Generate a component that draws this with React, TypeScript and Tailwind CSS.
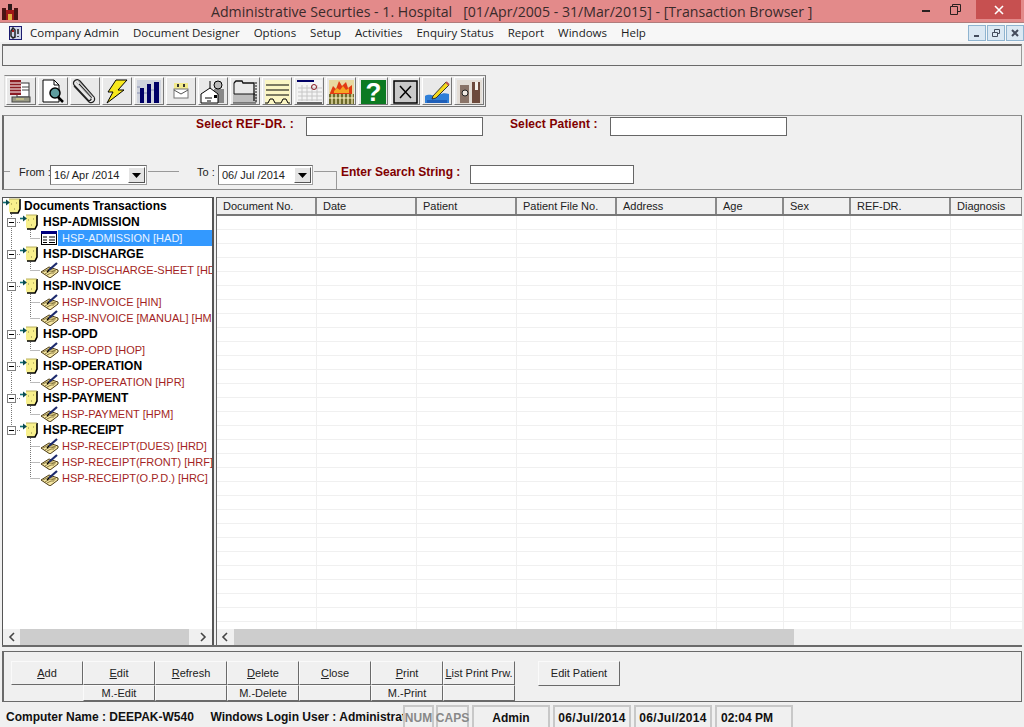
import React from 'react';

const menus = ['Company Admin', 'Document Designer', 'Options', 'Setup', 'Activities', 'Enquiry Status', 'Report', 'Windows', 'Help'];

const columns = [
  { label: 'Document No.', width: 'w-[100px]' },
  { label: 'Date', width: 'w-[100px]' },
  { label: 'Patient', width: 'w-[100px]' },
  { label: 'Patient File No.', width: 'w-[100px]' },
  { label: 'Address', width: 'w-[100px]' },
  { label: 'Age', width: 'w-[67px]' },
  { label: 'Sex', width: 'w-[67px]' },
  { label: 'REF-DR.', width: 'w-[100px]' },
  { label: 'Diagnosis', width: 'w-[72px]' },
];

const tree = [
  { name: 'HSP-ADMISSION', items: ['HSP-ADMISSION [HAD]'] },
  { name: 'HSP-DISCHARGE', items: ['HSP-DISCHARGE-SHEET [HDS]'] },
  { name: 'HSP-INVOICE', items: ['HSP-INVOICE [HIN]', 'HSP-INVOICE [MANUAL] [HMN]'] },
  { name: 'HSP-OPD', items: ['HSP-OPD [HOP]'] },
  { name: 'HSP-OPERATION', items: ['HSP-OPERATION [HPR]'] },
  { name: 'HSP-PAYMENT', items: ['HSP-PAYMENT [HPM]'] },
  { name: 'HSP-RECEIPT', items: ['HSP-RECEIPT(DUES) [HRD]', 'HSP-RECEIPT(FRONT) [HRF]', 'HSP-RECEIPT(O.P.D.) [HRC]'] },
];

const BookIcon = () => (
  <svg width="20" height="16" viewBox="0 0 20 16" className="shrink-0">
    <path d="M6 1h11v10l-2 4H7l-1-2z" fill="#f8f08c" />
    <path d="M17 1v10l-2 4H7" fill="none" stroke="#000" strokeWidth="1.6" />
    <path d="M6 1h11" stroke="#b8b060" />
    <path d="M11 11h1M8 6h1M13 5h1" stroke="#8a8440" />
    <path d="M0 4.5h5" stroke="#0f6f74" strokeWidth="1.6" />
    <path d="M3 1.5l4 3-4 3z" fill="#0b4a50" />
  </svg>
);

const PenBookIcon = () => (
  <svg width="18" height="16" viewBox="0 0 18 16" className="shrink-0">
    <path d="M0 10l8-5 9 3v2l-8 6z" fill="#f6e7a4" stroke="#4a3a14" />
    <path d="M2 10l6-3 7 2M4 12l5-3 5 1M6 13l4-2 3 0" fill="none" stroke="#8a7a40" />
    <path d="M8 8l8-7" stroke="#1c2a6e" strokeWidth="2.2" />
    <path d="M6 10l2-2" stroke="#000" strokeWidth="1.4" />
  </svg>
);

const FormIcon = () => (
  <svg width="16" height="14" viewBox="0 0 16 14" className="shrink-0">
    <rect x="0.5" y="0.5" width="15" height="13" fill="#fff" stroke="#000" />
    <rect x="0" y="0" width="16" height="3" fill="#000080" />
    <path d="M2 6h4M2 9h4M2 11.5h4M8 6h6M8 9h6M8 11.5h6" stroke="#000" />
  </svg>
);

const Gutter = ({ width, children }: { width: number; children: React.ReactNode }) => (
  <svg width={width} height="16" viewBox={`0 0 ${width} 16`} className="shrink-0">
    {children}
  </svg>
);

const dots = { stroke: '#777', strokeDasharray: '1 1', fill: 'none' };

const GroupRow = ({ name, last }: { name: string; last: boolean }) => (
  <div className="flex h-4 items-center">
    <Gutter width={17}>
      <path d={last ? 'M8.5 0v4' : 'M8.5 0v16'} {...dots} />
      <path d="M12 8.5h5" {...dots} />
      <rect x="4.5" y="4.5" width="8" height="8" fill="#fff" stroke="#808080" />
      <path d="M6 8.5h5" stroke="#000" />
    </Gutter>
    <BookIcon />
    <span className="ml-[3px] whitespace-nowrap text-[12px] font-bold text-black">{name}</span>
  </div>
);

const ChildRow = ({ label, lastGroup, lastItem, selected }: { label: string; lastGroup: boolean; lastItem: boolean; selected: boolean }) => (
  <div className="flex h-4 items-center">
    <Gutter width={38}>
      {!lastGroup && <path d="M8.5 0v16" {...dots} />}
      <path d={lastItem ? 'M27.5 0v8' : 'M27.5 0v16'} {...dots} />
      <path d="M27.5 8.5h10" {...dots} />
    </Gutter>
    {selected ? <FormIcon /> : <PenBookIcon />}
    {selected ? (
      <span className="ml-px flex h-4 flex-1 items-center whitespace-nowrap bg-[#3399ff] pl-[4px] text-[11px] text-[#e8f2ff]">{label}</span>
    ) : (
      <span className="ml-[3px] whitespace-nowrap text-[11px] text-[#a31f24]">{label}</span>
    )}
  </div>
);

const Arrow = ({ dir }: { dir: 'left' | 'right' }) => (
  <svg width="8" height="10" viewBox="0 0 8 10" className="shrink-0">
    <path d={dir === 'left' ? 'M6 1L2 5l4 4' : 'M2 1l4 4-4 4'} fill="none" stroke="#444" strokeWidth="1.6" />
  </svg>
);

const DateCombo = ({ value, width }: { value: string; width: string }) => (
  <div className={`flex h-[20px] ${width} shrink-0 items-center border border-t-[#6d6d6d] border-l-[#6d6d6d] border-r-[#a0a0a0] border-b-[#a0a0a0] bg-white pl-[3px] pr-px`}>
    <span className="flex-1 whitespace-nowrap text-[11px] text-[#222]">{value}</span>
    <div className="flex h-[16px] w-[17px] items-center justify-center border border-t-white border-l-white border-r-[#555] border-b-[#555] bg-[#e4e4e4]">
      <svg width="9" height="5" viewBox="0 0 9 5"><path d="M0 0h9L4.5 5z" fill="#000" /></svg>
    </div>
  </div>
);

const Bevel = ({ className, children }: { className: string; children?: React.ReactNode }) => (
  <div className={`flex shrink-0 items-center justify-center whitespace-nowrap border border-t-[#fafafa] border-l-[#fafafa] border-r-[#6a6a6a] border-b-[#6a6a6a] bg-[#f0f0f0] text-[11px] text-[#222] ${className}`}>
    {children}
  </div>
);

const StatusCell = ({ className, children }: { className: string; children: React.ReactNode }) => (
  <div className={`flex h-[23px] shrink-0 items-center whitespace-nowrap border-2 border-b-0 border-[#c8c8c8] text-[12px] font-bold text-[#111] ${className}`}>
    {children}
  </div>
);

const toolIcons: React.ReactNode[] = [
  <>
    <rect x="9" y="4" width="12" height="14" fill="#fff" stroke="#333" />
    <rect x="2" y="1" width="11" height="15" fill="#8c1c24" />
    <path d="M2 4h11M2 7h11M2 10h11M2 13h11" stroke="#fff" />
    <path d="M14 8h7M14 11h7" stroke="#444" />
    <rect x="4" y="18" width="18" height="5" fill="#9b9b86" stroke="#444" />
    <path d="M8 20h8" stroke="#e8e08a" />
  </>,
  <>
    <path d="M3 1h11l5 5v17H3z" fill="#fff" stroke="#000" />
    <path d="M14 1v5h5" fill="none" stroke="#000" />
    <circle cx="15" cy="14" r="5" fill="#5f9ea0" stroke="#000" strokeWidth="1.5" />
    <path d="M18 18l5 5" stroke="#000" strokeWidth="2.5" />
  </>,
  <>
    <path d="M2 7l15 16c3 2 7-1 5-5L8 2C5-1 0 2 2 6l14 15c2 2 4-1 3-3L7 5" fill="none" stroke="#222" strokeWidth="1.2" />
    <path d="M4 3l16 17M6 2l16 17" stroke="#bbb" />
  </>,
  <>
    <path d="M12 1h11L14 11h6L3 24l6-11H4z" fill="#f8e81c" stroke="#000" />
  </>,
  <>
    <rect x="1" y="1" width="24" height="23" fill="#cfd3dd" />
    <path d="M4 9h4v15H4zM11 5h4v19h-4zM18 3h5v21h-5z" fill="#000066" />
    <path d="M1 8h3M1 14h3M8 14h3M15 11h3" stroke="#8890b0" />
  </>,
  <>
    <rect x="6" y="4" width="14" height="6" fill="#f2ea8c" />
    <rect x="6" y="10" width="14" height="9" fill="#fff" stroke="#777" />
    <path d="M6 11l7 4 7-4" fill="none" stroke="#555" />
    <path d="M10 5v3M16 5v3" stroke="#333" strokeWidth="2" />
  </>,
  <>
    <rect x="14" y="10" width="10" height="14" fill="#888" />
    <circle cx="18" cy="6" r="4" fill="#bbb" stroke="#000" />
    <path d="M10 2v8" stroke="#000" />
    <path d="M1 15l9-6 8 6v9H1z" fill="#fff" stroke="#000" />
    <path d="M5 19h7M7 22h4" stroke="#000" />
    <rect x="14" y="16" width="3" height="3" fill="#000" />
  </>,
  <>
    <rect x="1" y="15" width="24" height="9" fill="#bdbdbd" />
    <path d="M2 4l2-2h6l1 2h11v18" fill="none" stroke="#111" strokeWidth="1.3" />
    <path d="M24 3v20" stroke="#111" strokeDasharray="2 1" />
    <path d="M2 4v11h21" fill="none" stroke="#111" />
    <path d="M1 24h23" stroke="#333" />
  </>,
  <>
    <rect x="1" y="1" width="25" height="24" fill="#fbf6c4" />
    <path d="M2 6h23M2 11h23M2 16h23" stroke="#000" strokeWidth="1.2" />
    <path d="M1 24h3l2-4h3l2 4h6l2-4h3l2 4h2" fill="none" stroke="#000" />
  </>,
  <>
    <rect x="1" y="1" width="25" height="24" fill="#f4f4f4" />
    <rect x="1" y="1" width="17" height="2" fill="#000066" />
    <path d="M6 6v16M11 6v16M16 6v16M21 6v16M2 9h24M2 13h24M2 17h24M2 21h24" stroke="#c6c6c6" />
    <circle cx="18" cy="8" r="2.5" fill="none" stroke="#8c1c24" />
    <path d="M1 24h25" stroke="#333" strokeWidth="1.5" />
  </>,
  <>
    <rect x="1" y="1" width="25" height="24" fill="#e8d9a0" />
    <path d="M2 14l3-7 3 3 3-8 3 5 4-4 2 6 4-3v10H2z" fill="#e23a12" />
    <path d="M6 12l3-3 3 2 3-4 3 4 3-2v5H6z" fill="#f5a623" />
    <rect x="1" y="15" width="25" height="10" fill="#6d6a2a" />
    <path d="M4 15v10M8 15v10M12 15v10M16 15v10M20 15v10M24 15v10M1 19h25" stroke="#fff6c4" strokeWidth="1.2" />
  </>,
  <>
    <rect x="1" y="1" width="25" height="24" fill="#0c7a22" />
    <text x="13.5" y="22" textAnchor="middle" fontSize="26" fontWeight="700" fontFamily="'Liberation Sans', sans-serif" fill="#fff">?</text>
  </>,
  <>
    <rect x="2" y="2" width="23" height="22" fill="#c9c9c9" stroke="#000" strokeWidth="1.5" />
    <path d="M8 7l11 12M19 7L8 19" stroke="#000" strokeWidth="1.5" />
  </>,
  <>
    <path d="M1 24v-7c5-3 8 1 13-1s7-2 11-1v9z" fill="#2f7fd8" />
    <path d="M3 24v-3h20v3z" fill="#1f5fb8" />
    <path d="M9 17L22 3l3 3-13 13-4 1z" fill="#f5d91c" stroke="#333" />
    <path d="M22 3l3 3" stroke="#b55" strokeWidth="2" />
  </>,
  <>
    <rect x="1" y="1" width="25" height="24" fill="#e3ddd6" />
    <rect x="4" y="6" width="9" height="18" fill="#8a7468" />
    <circle cx="9" cy="14" r="3" fill="#efe9e2" stroke="#222" />
    <rect x="16" y="3" width="8" height="21" fill="#6d4a3c" />
    <path d="M19 3h3v8h-3z" fill="#f4f0ea" />
  </>,
];

export default function App() {
  return (
    <div className="flex h-[727px] w-[1024px] flex-col overflow-hidden bg-[#f0f0f0] font-['Liberation_Sans',Arial,sans-serif]">
      {/* title bar */}
      <div className="flex h-[23px] shrink-0 items-start border-b border-[#b07c7c] bg-[#e38a8a]">
        <svg width="18" height="18" viewBox="0 0 18 18" className="ml-[1px] mt-[3px] shrink-0">
          <path d="M2 7h14v10H2z" fill="#a01818" />
          <rect x="7" y="1" width="4" height="6" fill="#2a1a1a" />
          <rect x="1" y="5" width="4" height="12" fill="#4a1414" />
          <rect x="13" y="5" width="4" height="12" fill="#4a1414" />
          <rect x="7" y="11" width="4" height="6" fill="#e2b040" />
        </svg>
        <div className="ml-[192px] flex-1 whitespace-pre pt-[1px] font-['Open_Sans',sans-serif] text-[14.15px] leading-[21px] text-[#3a2a2a]">
          Administrative Securties - 1. Hospital   [01/Apr/2005 - 31/Mar/2015] - [Transaction Browser ]
        </div>
        <svg width="10" height="3" viewBox="0 0 10 3" className="mt-[10px] shrink-0"><rect width="8" height="2" fill="#2a2020" /></svg>
        <svg width="11" height="11" viewBox="0 0 11 11" className="ml-[18px] mt-[4px] shrink-0">
          <path d="M0.5 2.5h7v8h-7zM2.5 2.5v-2h8v7h-3" fill="none" stroke="#2a2020" />
        </svg>
        <div className="ml-[15px] mr-[3px] flex h-[19px] w-[45px] shrink-0 items-center justify-center bg-[#c75050]">
          <svg width="10" height="10" viewBox="0 0 10 10"><path d="M1 1l8 8M9 1l-8 8" stroke="#fff" strokeWidth="1.6" /></svg>
        </div>
      </div>

      {/* menu bar */}
      <div className="flex h-[19px] shrink-0 items-center bg-[#f7f7f7] pl-[9px] font-['Open_Sans',sans-serif] text-[11.5px] text-[#1c1c1c]">
        <svg width="13" height="14" viewBox="0 0 13 14" className="shrink-0">
          <rect x="0.5" y="0.5" width="12" height="13" fill="#cfd6ea" stroke="#1c1c70" />
          <path d="M4 2l-2 3v5l2 2 2-1V4zM9 3v5M9 10v1" fill="none" stroke="#222" strokeWidth="1.5" />
          <path d="M3 4h2v2H3z" fill="#a01818" />
        </svg>
        <div className="ml-[8px] flex flex-1 gap-[14px] whitespace-nowrap">
          {menus.map((m) => (
            <span key={m}>{m}</span>
          ))}
        </div>
        {['min', 'restore', 'close'].map((k) => (
          <div key={k} className="ml-px flex h-[16px] w-[18px] shrink-0 items-center justify-center border border-[#8fb4d0] bg-[#dbe8f3]">
            <svg width="10" height="10" viewBox="0 0 10 10">
              {k === 'min' && <path d="M2 8h5" stroke="#444c5c" strokeWidth="2" />}
              {k === 'restore' && <path d="M1.5 4.5h5v4h-5zM3.5 4.5v-3h5v4h-2" fill="none" stroke="#444c5c" />}
              {k === 'close' && <path d="M2 2l6 6M8 2l-6 6" stroke="#444c5c" strokeWidth="2" />}
            </svg>
          </div>
        ))}
      </div>

      {/* empty strip */}
      <div className="ml-[2px] mr-[2px] mt-[2px] h-[22px] shrink-0 border border-t-2 border-[#6a6a6a] border-r-[#999] bg-[#f0f0f0]" />

      {/* toolbar */}
      <div className="ml-[4px] mt-[9px] flex h-[32px] w-[482px] shrink-0 items-center gap-[2px] border border-[#777] border-l-[#ddd] border-t-[#888] pl-[1px]">
        {toolIcons.map((icon, i) => (
          <div key={i} className="flex h-[28px] w-[30px] shrink-0 items-center justify-center border border-t-white border-l-white border-r-[#777] border-b-[#777] bg-[#e9e9e9]">
            <svg width="26" height="25" viewBox="0 0 26 25">{icon}</svg>
          </div>
        ))}
      </div>

      {/* filter panel */}
      <div className="ml-[2px] mr-[2px] mt-[8px] flex h-[75px] shrink-0 flex-col border border-l-2 border-[#8c8c8c] border-l-[#6a6a6a] border-r-[#777] border-b-[#8c8c8c] bg-[#f0f0f0] text-[12px]">
        <div className="flex h-[22px] items-start pt-px">
          <span className="ml-[192px] w-[110px] whitespace-nowrap font-bold leading-[14px] tracking-[0.2px] text-[#800000]">Select REF-DR. :</span>
          <div className="h-[19px] w-[177px] border border-[#666] bg-white" />
          <span className="ml-[27px] w-[100px] whitespace-nowrap font-bold leading-[14px] tracking-[0.1px] text-[#800000]">Select Patient :</span>
          <div className="h-[19px] w-[177px] border border-[#666] bg-white" />
        </div>
        <div className="mt-[27px] flex items-start">
          <div className="mt-[6px] h-px w-[6px] bg-[#999]" />
          <span className="ml-[9px] w-[31px] whitespace-nowrap text-[11px] leading-[14px] text-[#222]">From :</span>
          <DateCombo value="16/ Apr /2014" width="w-[97px]" />
          <div className="ml-px mt-[6px] h-px w-[31px] bg-[#999]" />
          <span className="ml-[18px] w-[21px] whitespace-nowrap text-[11px] leading-[14px] text-[#222]">To :</span>
          <DateCombo value="06/ Jul /2014" width="w-[95px]" />
          <div className="ml-px mt-[6px] h-[18px] w-[23px] border-r border-t border-[#999]" />
          <span className="ml-[4px] w-[129px] whitespace-nowrap font-bold leading-[14px] text-[#800000]">Enter Search String :</span>
          <div className="h-[19px] w-[164px] border border-[#666] bg-white" />
        </div>
      </div>

      {/* tree and grid */}
      <div className="ml-[2px] mr-[2px] mt-[7px] flex h-[450px] shrink-0 border-b-2 border-[#6a6a6a]">
        <div className="flex h-full w-[212px] shrink-0 flex-col border-l border-r-2 border-t border-[#555] bg-white">
          <div className="flex-1 overflow-hidden">
            <div className="flex h-4 items-center">
              <BookIcon />
              <span className="ml-[1px] whitespace-nowrap text-[12px] font-bold text-black">Documents Transactions</span>
            </div>
            {tree.map((group, gi) => (
              <div key={group.name}>
                <GroupRow name={group.name} last={gi === tree.length - 1} />
                {group.items.map((item, ii) => (
                  <ChildRow
                    key={item}
                    label={item}
                    lastGroup={gi === tree.length - 1}
                    lastItem={ii === group.items.length - 1}
                    selected={gi === 0}
                  />
                ))}
              </div>
            ))}
          </div>
          <div className="flex h-[16px] shrink-0 items-center bg-[#f0f0f0] pl-[5px] pr-[5px]">
            <Arrow dir="left" />
            <div className="ml-[4px] h-full w-[169px] bg-[#cdcdcd]" />
            <div className="flex-1" />
            <Arrow dir="right" />
          </div>
        </div>

        <div className="ml-[2px] flex h-full flex-1 flex-col overflow-hidden border-l border-t border-[#666] bg-white">
          <div className="flex h-[18px] shrink-0 border-b-2 border-[#777] bg-[#f0f0f0]">
            {columns.map((c) => (
              <div key={c.label} className={`flex ${c.width} shrink-0 items-center border-r-2 border-[#8a8a8a] pl-[6px] text-[11px] whitespace-nowrap text-[#222]`}>
                {c.label}
              </div>
            ))}
          </div>
          <div className="flex-1 overflow-hidden">
            {Array.from({ length: 30 }).map((_, r) => (
              <div key={r} className="flex h-[14px]">
                {columns.map((c) => (
                  <div key={c.label} className={`${c.width} shrink-0 border-b border-r border-[#f0f0f0]`} />
                ))}
              </div>
            ))}
          </div>
          <div className="flex h-[16px] shrink-0 items-center bg-[#f0f0f0] pl-[4px]">
            <Arrow dir="left" />
            <div className="ml-[5px] h-full w-[560px] bg-[#cdcdcd]" />
          </div>
        </div>
      </div>

      {/* buttons */}
      <div className="ml-[2px] mr-[2px] mt-[4px] h-[51px] shrink-0 border border-l-2 border-[#6a6a6a] pl-[7px] pt-[9px]">
        <div className="flex h-[24px]">
          <Bevel className="h-[24px] w-[72px]"><span><u>A</u>dd</span></Bevel>
          <Bevel className="h-[24px] w-[72px]"><span><u>E</u>dit</span></Bevel>
          <Bevel className="h-[24px] w-[72px]"><span><u>R</u>efresh</span></Bevel>
          <Bevel className="h-[24px] w-[72px]"><span><u>D</u>elete</span></Bevel>
          <Bevel className="h-[24px] w-[72px]"><span><u>C</u>lose</span></Bevel>
          <Bevel className="h-[24px] w-[72px]"><span><u>P</u>rint</span></Bevel>
          <Bevel className="h-[24px] w-[72px]"><span><u>L</u>ist Print Prw.</span></Bevel>
          <Bevel className="ml-[23px] h-[25px] w-[82px]">Edit Patient</Bevel>
        </div>
        <div className="ml-[72px] flex h-[16px]">
          <Bevel className="h-[16px] w-[72px]">M.-Edit</Bevel>
          <Bevel className="h-[16px] w-[72px]" />
          <Bevel className="h-[16px] w-[72px]">M.-Delete</Bevel>
          <Bevel className="h-[16px] w-[72px]" />
          <Bevel className="h-[16px] w-[72px]">M.-Print</Bevel>
          <Bevel className="h-[16px] w-[72px]" />
        </div>
      </div>

      {/* status bar */}
      <div className="mt-[3px] flex h-[23px] shrink-0">
        <div className="flex h-[23px] w-[403px] shrink-0 items-center overflow-hidden whitespace-pre pl-[6px] text-[12px] font-bold text-[#111]">
          Computer Name : DEEPAK-W540     Windows Login User : Administrator
        </div>
        <StatusCell className="w-[31px] justify-center text-[#888]">NUM</StatusCell>
        <StatusCell className="ml-[2px] w-[33px] justify-center text-[#888]">CAPS</StatusCell>
        <StatusCell className="ml-[3px] w-[78px] justify-center">Admin</StatusCell>
        <StatusCell className="ml-[3px] w-[78px] justify-center tracking-[0.3px]">06/Jul/2014</StatusCell>
        <StatusCell className="ml-[3px] w-[78px] justify-center tracking-[0.3px]">06/Jul/2014</StatusCell>
        <StatusCell className="ml-[3px] w-[78px] pl-[4px]">02:04 PM</StatusCell>
      </div>
    </div>
  );
}
